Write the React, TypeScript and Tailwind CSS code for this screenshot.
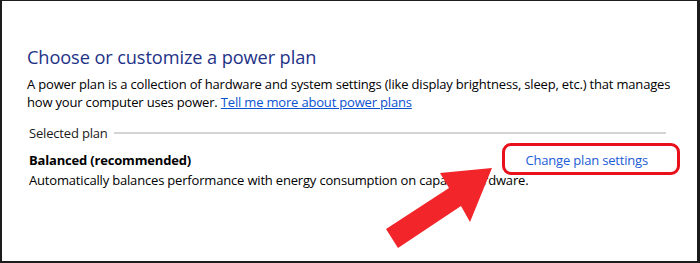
export default function App() {
  return (
    <div className="relative w-[700px] h-[263px] bg-white overflow-hidden">
      <div className="h-full border-t border-l-2 border-r-[3px] border-b-2 border-[#1c1c1c] pl-[25px] pr-[31px] pt-[44px] font-['Open_Sans',sans-serif] text-black tracking-[-0.18px]">
        <h1 className="text-[18.2px] leading-[24px] text-[#1e3287] font-normal tracking-[-0.1px]">
          Choose or customize a power plan
        </h1>
        <div className="mt-[6px] text-[13px] leading-[18px] whitespace-nowrap">
          <div>
            A power plan is a collection of hardware and system settings (like display brightness, sleep, etc.) that manages
          </div>
          <div>
            how your computer uses power.{" "}
            <a href="#" className="text-[#0b52d1] underline">
              Tell me more about power plans
            </a>
          </div>
        </div>
        <div className="mt-[13px] flex items-center gap-[6px] text-[13px] leading-[18px] text-[#1a1a1a]">
          <span className="pl-[2px]">Selected plan</span>
          <div className="flex-1 h-[2px] bg-[#d4d4d4]" />
        </div>
        <div className="mt-[9px] flex items-center justify-between pl-[2px] pr-[18px] text-[13px] leading-[18px]">
          <span className="font-bold">Balanced (recommended)</span>
          <a href="#" className="text-[#1c5bd6]">
            Change plan settings
          </a>
        </div>
        <div className="mt-[2px] pl-[2px] text-[13px] leading-[18px]">
          Automatically balances performance with energy consumption on capable hardware.
        </div>
      </div>

      <div className="absolute left-[502px] top-[143px] w-[178px] h-[32px] rounded-[9px] border-[3px] border-[#e8101a]" />
      <svg className="absolute left-0 top-0" width="700" height="263" viewBox="0 0 700 263">
        <polygon
          points="386,229 449,188 440,173 492,168 470,222 461,206 398,248"
          fill="#f2262a"
        />
      </svg>
    </div>
  );
}
